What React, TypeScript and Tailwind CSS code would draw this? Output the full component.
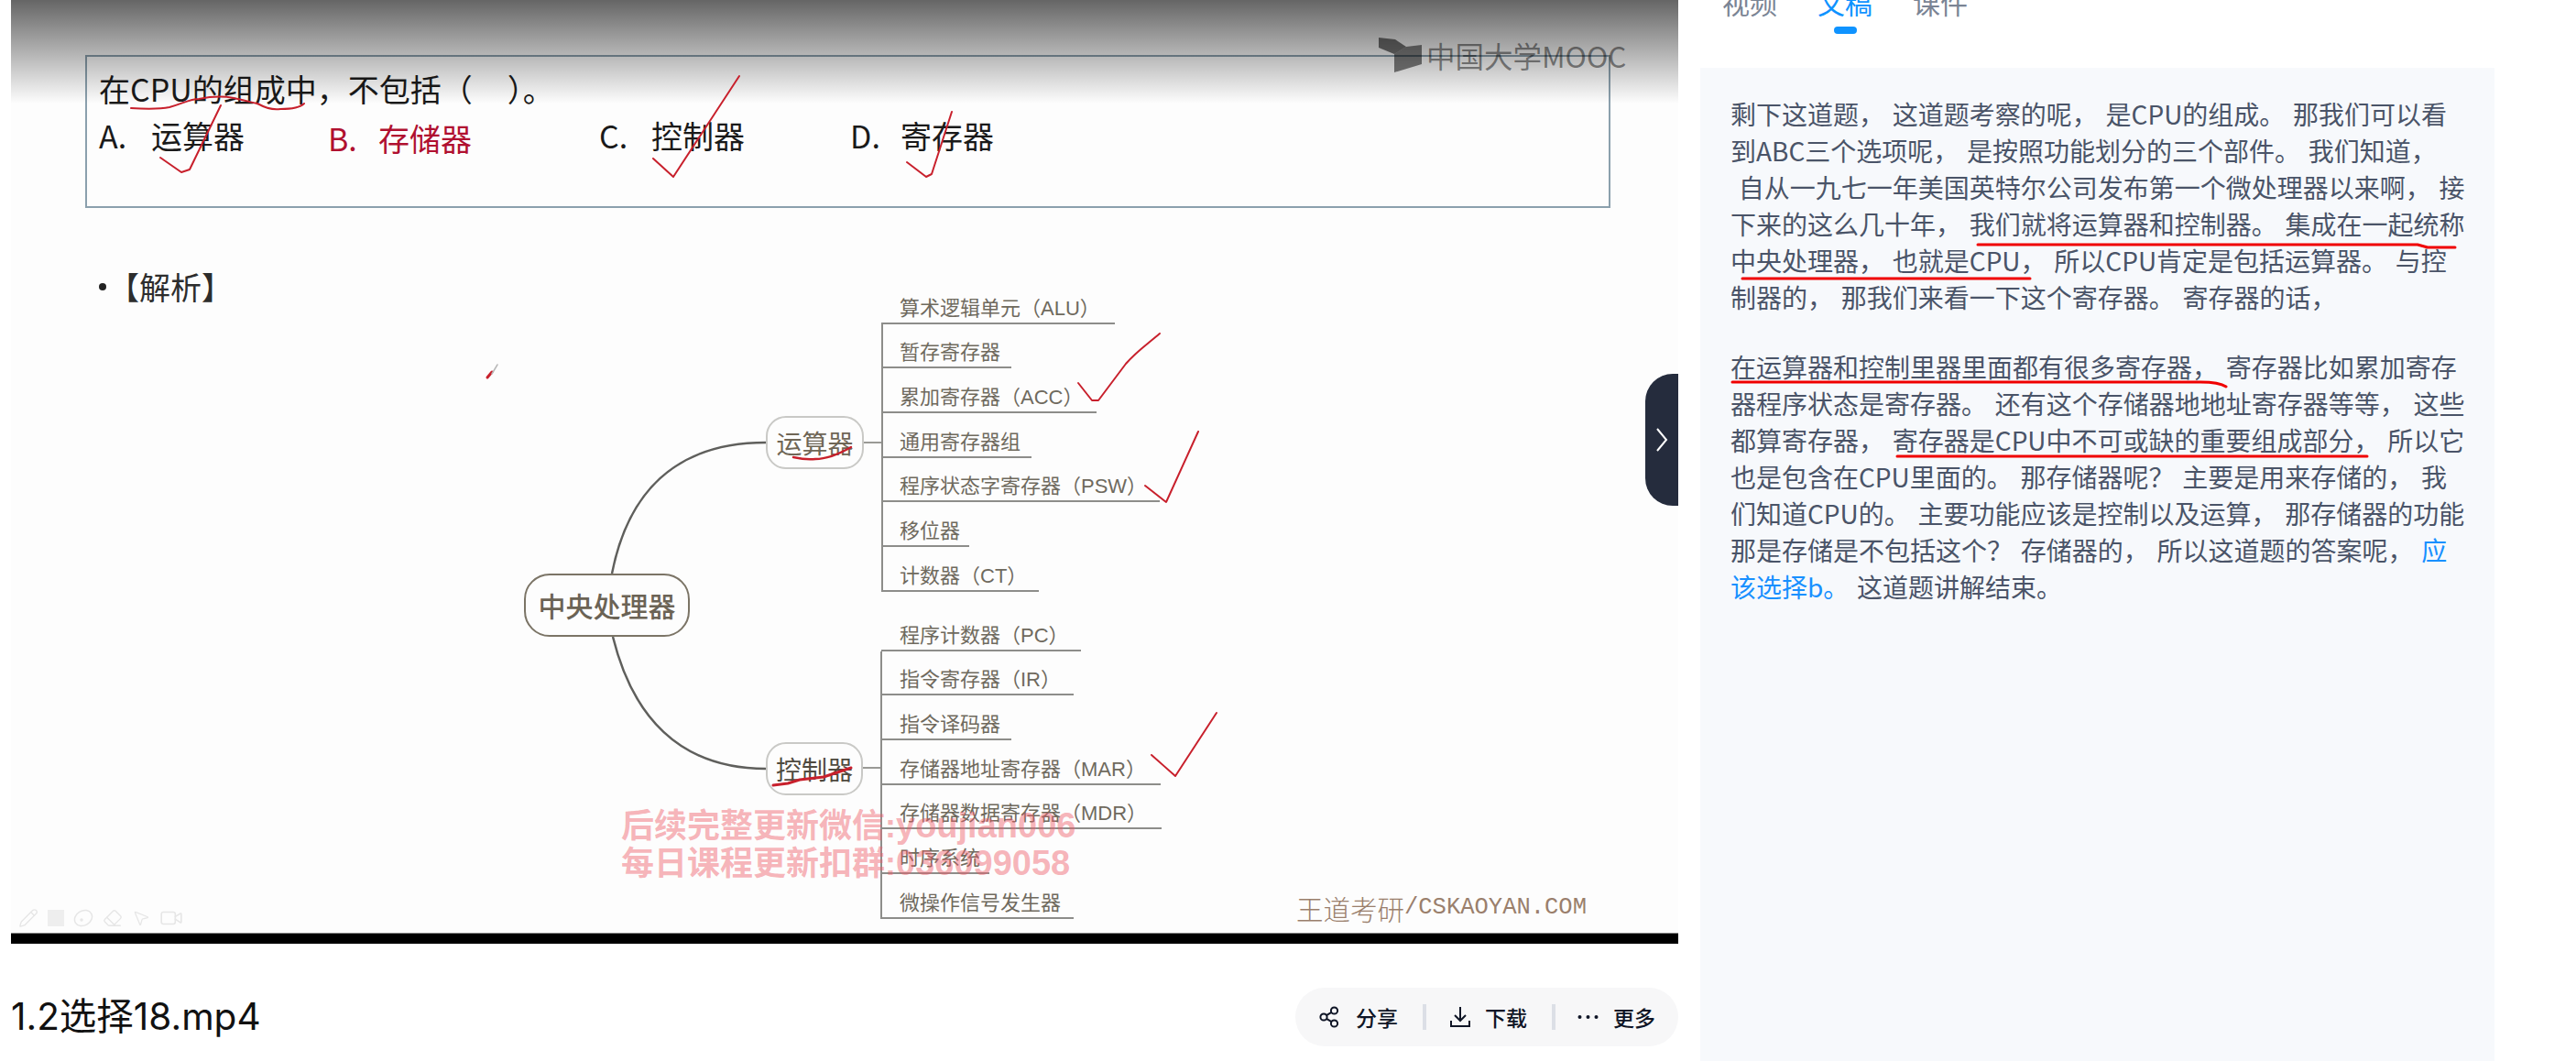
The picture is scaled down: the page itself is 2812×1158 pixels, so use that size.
import { Eraser, MousePointer2, Pencil, Video } from "lucide-react";

const upperLeaves = [
  { text: "算术逻辑单元（ALU）", width: "w-[255px]" },
  { text: "暂存寄存器", width: "w-[142px]" },
  { text: "累加寄存器（ACC）", width: "w-[235px]" },
  { text: "通用寄存器组", width: "w-[164px]" },
  { text: "程序状态字寄存器（PSW）", width: "w-[304px]" },
  { text: "移位器", width: "w-[96px]" },
  { text: "计数器（CT）", width: "w-[172px]" },
];

const lowerLeaves = [
  { text: "程序计数器（PC）", width: "w-[218px]" },
  { text: "指令寄存器（IR）", width: "w-[210px]" },
  { text: "指令译码器", width: "w-[142px]" },
  { text: "存储器地址寄存器（MAR）", width: "w-[305px]" },
  { text: "存储器数据寄存器（MDR）", width: "w-[306px]" },
  { text: "时序系统", width: "w-[118px]" },
  { text: "微操作信号发生器", width: "w-[210px]" },
];

function LeafList({ items, className }: { items: typeof upperLeaves; className: string }) {
  return (
    <div className={`absolute left-[950px] flex flex-col ${className}`}>
      {items.map((item) => (
        <div
          key={item.text}
          className={`${item.width} h-[48.67px] flex items-end pl-[20px] border-b-[2px] border-[#8d8d8a] font-['Liberation_Sans','Noto_Sans_CJK_SC',sans-serif] text-[22px] leading-[30px] text-[#6f6a5e] whitespace-nowrap`}
        >
          {item.text}
        </div>
      ))}
    </div>
  );
}

function Option({ letter, label, className, tight }: { letter: string; label: string; className: string; tight?: boolean }) {
  return (
    <div className={`flex text-[34px] leading-[44px] whitespace-nowrap ${className}`}>
      <span className={tight ? "w-[55px]" : "w-[57px]"}>{letter}.</span>
      <span>{label}</span>
    </div>
  );
}

function ActionBar() {
  return (
    <div className="flex h-[64px] w-[418px] items-center rounded-[32px] bg-[#f7f7f8] pl-[26px] text-[23px] font-medium text-[#0f1526]">
      <svg width="22" height="24" viewBox="0 0 22 24" fill="none" stroke="#0f1526" strokeWidth="2">
        <circle cx="5" cy="12" r="3.6" />
        <circle cx="16.5" cy="5" r="3.6" />
        <circle cx="16.5" cy="19" r="3.6" />
        <path d="M8 10.2l5.5-3.4M8 13.8l5.5 3.4" />
      </svg>
      <span className="ml-[18px] w-[46px] whitespace-nowrap">分享</span>
      <span className="ml-[27px] h-[28px] w-[4px] bg-[#dcdfe6]" />
      <svg className="ml-[26px]" width="22" height="26" viewBox="0 0 22 26" fill="none" stroke="#0f1526" strokeWidth="2">
        <path d="M11 2v15M5 11l6 6 6-6M1 17v6h20v-6" />
      </svg>
      <span className="ml-[16px] w-[46px] whitespace-nowrap">下载</span>
      <span className="ml-[27px] h-[28px] w-[4px] bg-[#dcdfe6]" />
      <svg className="ml-[24px]" width="23" height="6" viewBox="0 0 23 6" fill="#0f1526">
        <circle cx="2.5" cy="3" r="2" />
        <circle cx="11.5" cy="3" r="2" />
        <circle cx="20.5" cy="3" r="2" />
      </svg>
      <span className="ml-[16px] w-[46px] whitespace-nowrap">更多</span>
    </div>
  );
}

function Slide() {
  return (
    <div className="relative h-[1030px] w-[1820px] overflow-hidden bg-[#fdfdfd] font-['Noto_Sans_CJK_SC',sans-serif] text-[#1a1a1a]">
      {/* question box */}
      <div className="ml-[81px] mt-[60px] h-[167px] w-[1665px] border-[2px] border-[#8ba0ad] pl-[13px] pt-[12px]">
        <div className="text-[34px] leading-[46px] whitespace-pre">在CPU的组成中，不包括（&nbsp;&nbsp;&nbsp;&nbsp;&nbsp;）。</div>
        <div className="relative mt-[6px] h-[50px]">
          <Option letter="A" label="运算器" className="absolute left-0 top-0" />
          <Option letter="B" label="存储器" className="absolute left-[250px] top-[3px] text-[#b01030]" tight />
          <Option letter="C" label="控制器" className="absolute left-[546px] top-0" />
          <Option letter="D" label="寄存器" className="absolute left-[820px] top-0" tight />
        </div>
      </div>

      <div className="ml-[96px] mt-[62px] flex items-center text-[34px] leading-[48px] text-[#2d2d2d]">
        <span className="mr-[2px] h-[8px] w-[8px] rounded-full bg-[#222]" />
        【解析】
      </div>

      {/* mind map */}
      <svg className="absolute inset-0" width="1820" height="1030" viewBox="12 0 1820 1030" fill="none">
        <path d="M668 626C685 540 735 483 836 483M669 695C690 780 740 839 836 839" stroke="#5f5f5c" strokeWidth="2.5" />
        <path d="M943 483h20M942 838h20" stroke="#9a9a96" strokeWidth="2" />
        <path d="M963 354V646M962 711V1003" stroke="#8d8d8a" strokeWidth="2" />
      </svg>
      <div className="absolute left-[560px] top-[626px] flex h-[69px] w-[181px] items-center justify-center rounded-[28px] border-[2.5px] border-[#7b7466] bg-[#fdfdfd] text-[30px] font-medium text-[#6b6355]">
        中央处理器
      </div>
      <div className="absolute left-[824px] top-[454px] flex h-[58px] w-[107px] items-center justify-center rounded-[22px] border-[2px] border-[#c9c9c6] bg-[#fdfdfd] text-[28px] text-[#6f6656]">
        运算器
      </div>
      <div className="absolute left-[824px] top-[810px] flex h-[58px] w-[106px] items-center justify-center rounded-[22px] border-[2px] border-[#c9c9c6] bg-[#fdfdfd] text-[28px] text-[#4f4a40]">
        控制器
      </div>
      <LeafList items={upperLeaves} className="top-[305px]" />
      <LeafList items={lowerLeaves} className="top-[662px]" />

      {/* watermark */}
      <div className="absolute left-[666px] top-[881px] whitespace-nowrap text-[36px] font-bold leading-[40px] text-[#ee5a66]/45 font-['Liberation_Sans','Noto_Sans_CJK_SC',sans-serif]">
        <div>后续完整更新微信:<span className="text-[38px]">youjian006</span></div>
        <div>每日课程更新扣群:<span className="text-[38px]">036099058</span></div>
      </div>

      {/* brand */}
      <div className="absolute left-[1403px] top-[972px] flex items-center whitespace-nowrap text-[#9a7f6c]">
        <span className="text-[29.5px] font-light leading-[38px]">王道考研</span>
        <span className="font-['Liberation_Mono',monospace] text-[25.5px] leading-[38px]">/CSKAOYAN.COM</span>
      </div>

      {/* drawing tools */}
      <div className="absolute left-[8px] top-[989px] flex items-center gap-[10px] text-[#e6e6e6]">
        <Pencil size={22} strokeWidth={1.5} />
        <span className="h-[18px] w-[18px] bg-[#eeeeee]" />
        <svg width="22" height="22" viewBox="0 0 22 22" fill="none" stroke="currentColor" strokeWidth="1.5">
          <ellipse cx="11" cy="11" rx="10" ry="8" transform="rotate(-30 11 11)" />
          <circle cx="9" cy="13" r="1" />
        </svg>
        <Eraser size={22} strokeWidth={1.5} />
        <MousePointer2 size={20} strokeWidth={1.5} />
        <Video size={26} strokeWidth={1.5} />
      </div>

      {/* top fade */}
      <div className="absolute inset-x-0 top-0 h-[113px] bg-gradient-to-b from-black/60 to-transparent" />

      {/* mooc logo */}
      <div className="absolute left-[1493px] top-[40px] flex items-center text-black/45">
        <svg width="48" height="38" viewBox="0 0 48 38">
          <path d="M0 0L18 2L30 10L17 18L0 11Z" fill="#000" fillOpacity="0.55" />
          <path d="M17 18L30 10L47 8V29L17 38Z" fill="#000" fillOpacity="0.5" />
        </svg>
        <span className="ml-[4px] whitespace-nowrap text-[31.5px] font-normal leading-[40px]">中国大学MOOC</span>
      </div>

      {/* black strip */}
      <div className="absolute inset-x-0 bottom-0 h-[12px] border-t border-[#888] bg-black" />

      {/* collapse handle */}
      <div className="absolute right-0 top-[408px] flex h-[144px] w-[36px] items-center justify-center rounded-l-[30px] bg-[#252c3d]">
        <svg width="13" height="26" viewBox="0 0 13 26" fill="none" stroke="#fff" strokeWidth="2">
          <path d="M1 1l10 12L1 25" />
        </svg>
      </div>
    </div>
  );
}

export default function App() {
  return (
    <div className="relative flex h-[1158px] w-[2812px] overflow-hidden bg-white pl-[12px] font-['Noto_Sans_CJK_SC',sans-serif]">
      <div className="w-[1820px] shrink-0">
        <Slide />
        <div className="flex h-[128px] items-center justify-between pt-[32px]">
          <h1 className="font-['Inter','Noto_Sans_CJK_SC',sans-serif] text-[40.5px] font-normal text-[#111]">1.2选择18.mp4</h1>
          <ActionBar />
        </div>
      </div>

      <div className="ml-[24px] w-[867px] shrink-0">
        <div className="flex h-[74px] items-start gap-[44px] pl-[24px] text-[30px] leading-[30px] text-[#7a8494]">
          <span className="-mt-[13px]">视频</span>
          <div className="-mt-[13px] flex flex-col items-center text-[#0f93ff]">
            <span>文稿</span>
            <span className="mt-[12px] h-[8px] w-[25px] rounded-full bg-[#0f93ff]" />
          </div>
          <span className="-mt-[13px]">课件</span>
        </div>
        <div className="h-[1084px] bg-[#f7f9fc] pl-[33px] pt-[30px] text-[28px] leading-[40px] text-[#4a5468] whitespace-pre [word-spacing:2.5px]">
          <p>剩下这道题， 这道题考察的呢， 是CPU的组成。 那我们可以看</p>
          <p>到ABC三个选项呢， 是按照功能划分的三个部件。 我们知道，</p>
          <p> 自从一九七一年美国英特尔公司发布第一个微处理器以来啊， 接</p>
          <p>下来的这么几十年， 我们就将运算器和控制器。 集成在一起统称</p>
          <p>中央处理器， 也就是CPU， 所以CPU肯定是包括运算器。 与控</p>
          <p>制器的， 那我们来看一下这个寄存器。 寄存器的话，</p>
          <p className="mt-[36px]">在运算器和控制里器里面都有很多寄存器， 寄存器比如累加寄存</p>
          <p>器程序状态是寄存器。 还有这个存储器地地址寄存器等等， 这些</p>
          <p>都算寄存器， 寄存器是CPU中不可或缺的重要组成部分， 所以它</p>
          <p>也是包含在CPU里面的。 那存储器呢？ 主要是用来存储的， 我</p>
          <p>们知道CPU的。 主要功能应该是控制以及运算， 那存储器的功能</p>
          <p>那是存储是不包括这个？ 存储器的， 所以这道题的答案呢， <span className="text-[#1890ff]">应</span></p>
          <p><span className="text-[#1890ff]">该选择b。</span> 这道题讲解结束。</p>
        </div>
      </div>

      {/* hand-drawn pen marks */}
      <svg className="pointer-events-none absolute inset-0" width="2812" height="1158" viewBox="0 0 2812 1158" fill="none" strokeLinecap="round" strokeLinejoin="round">
        <g stroke="#c8202c" strokeWidth="2">
          <path d="M143 118C160 119 175 119 185 117C200 113 207 108 217 108C232 105 245 105 255 107C265 109 272 111 281 113C292 119 300 120 306 119C318 119 328 117 332 113" />
          <path d="M175 172L198 188L207 185L241 115" />
          <path d="M713 173L735 193L807 83" />
          <path d="M990 177L1011 193L1017 190L1039 122" />
          <path d="M1177 418L1192 437L1199 437L1229 397C1240 384 1252 376 1266 364" />
          <path d="M1250 530L1273 548L1308 471" />
          <path d="M866 499C875 501 882 502 890 501C900 501 915 496 929 488" strokeWidth="2.5" />
          <path d="M844 857L860 855L873 851L899 848L929 838" strokeWidth="3" />
          <path d="M1257 824L1283 847L1328 778" />
          <path d="M532 412L537 406" strokeWidth="3" />
          <path d="M537 408L543 398" stroke="#b8b8b8" strokeWidth="1.5" />
        </g>
        <g stroke="#f00000" strokeWidth="3">
          <path d="M2159 267H2639L2650 270H2680" />
          <path d="M1902 304H2216" />
          <path d="M1891 417H2402C2412 417 2424 418 2430 422" />
          <path d="M2071 498H2584" />
        </g>
      </svg>
    </div>
  );
}
